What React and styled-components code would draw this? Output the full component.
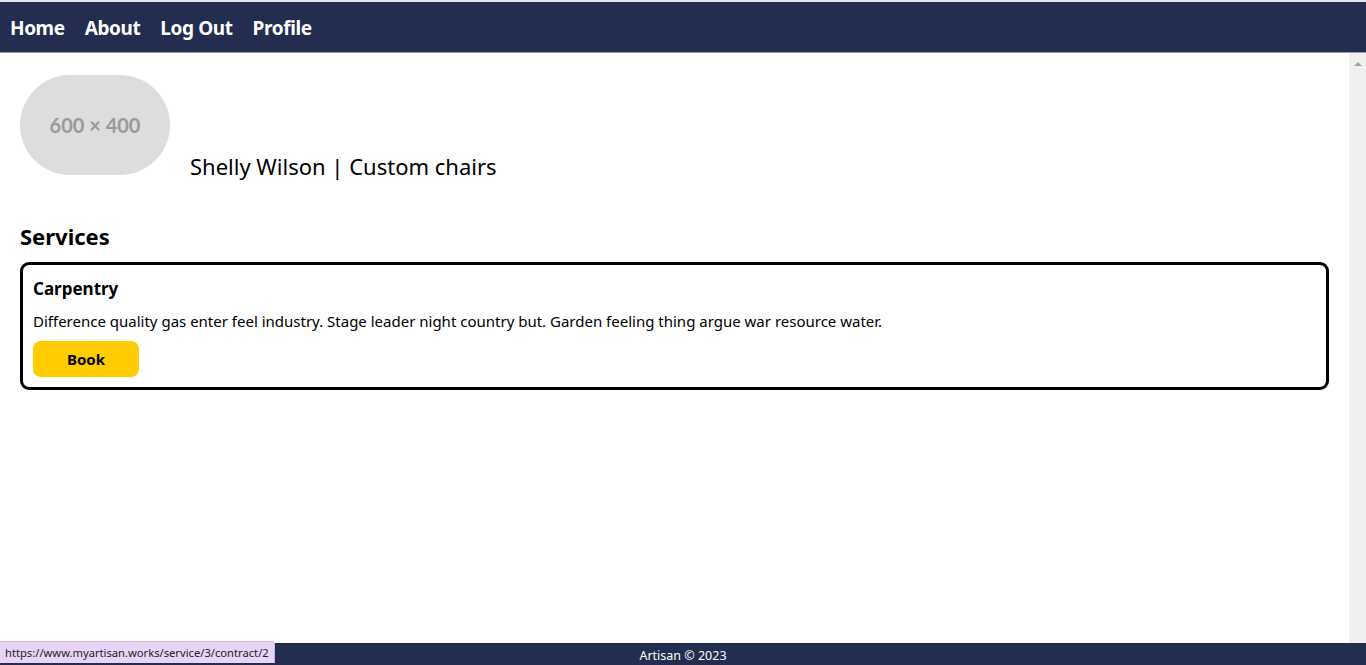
import React from 'react';
import styled, { createGlobalStyle } from 'styled-components';

const navy = '#222d4f';

const GlobalStyle = createGlobalStyle`
  html, body {
    margin: 0;
    padding: 0;
    height: 100%;
    overflow: hidden;
    background: #ffffff;
    font-family: 'Noto Sans', 'Open Sans', sans-serif;
    color: #000;
  }
`;

const Page = styled.div`
  height: 100vh;
  display: flex;
  flex-direction: column;
`;

const NavBar = styled.nav`
  flex: none;
  height: 52px;
  box-sizing: border-box;
  background: ${navy};
  border-top: 2px solid #e6e6e6;
  display: flex;
  align-items: center;
  gap: 20px;
  padding: 2px 10px 0;
`;

const NavRule = styled.div`
  flex: none;
  height: 1px;
  background: #9a9a9a;
`;

const NavLink = styled.a`
  color: #ffffff;
  font-size: 19px;
  font-weight: 700;
  text-decoration: none;
  letter-spacing: -0.4px;
`;

const Body = styled.div`
  flex: 1;
  min-height: 0;
  display: flex;
`;

const Main = styled.main`
  flex: 1;
  min-width: 0;
  overflow-y: auto;
  padding: 22px 20px 40px;
`;

const ScrollRail = styled.div`
  flex: none;
  width: 17px;
  background: #f0f0f0;
  display: flex;
  justify-content: center;

  &::before {
    content: '';
    margin-top: 9px;
    width: 0;
    height: 0;
    border-left: 4px solid transparent;
    border-right: 4px solid transparent;
    border-bottom: 4px solid #a3a3a3;
  }
`;

const Profile = styled.div`
  font-size: 22px;
  line-height: 1.3;
`;

const Avatar = styled.div`
  display: inline-block;
  overflow: hidden;
  vertical-align: baseline;
  width: 150px;
  height: 100px;
  line-height: 100px;
  text-align: center;
  border-radius: 50px;
  background: #dddddd;
  color: #999999;
  font-family: Lato, 'Noto Sans', sans-serif;
  font-size: 20px;
  font-weight: 700;
  margin-right: 20px;
`;

const SectionTitle = styled.h2`
  font-size: 22px;
  font-weight: 700;
  margin: 42px 0 13px;
  line-height: 1.2;
`;

const ServiceCard = styled.div`
  border: 3px solid #000;
  border-radius: 9px;
  padding: 13px 10px 10px;
`;

const ServiceName = styled.h3`
  font-size: 17px;
  font-weight: 700;
  margin: 0 0 11px;
  line-height: 1.3;
`;

const ServiceText = styled.p`
  font-size: 15px;
  margin: 0 0 9px;
  line-height: 1.4;
`;

const BookButton = styled.button`
  width: 106px;
  height: 36px;
  border: none;
  border-radius: 8px;
  background: #ffcc00;
  color: #000;
  font-family: inherit;
  font-size: 15px;
  font-weight: 700;
  cursor: pointer;
`;

const Footer = styled.footer`
  position: fixed;
  left: 0;
  right: 0;
  bottom: 0;
  height: 22px;
  background: ${navy};
  color: #ffffff;
  font-size: 12.5px;
  display: flex;
  align-items: center;
  justify-content: center;
  padding-top: 2px;
  box-sizing: border-box;
`;

const StatusTip = styled.div`
  position: fixed;
  left: 0;
  bottom: 2px;
  height: 21px;
  padding: 0 5px;
  display: flex;
  align-items: center;
  background: #e9d4f7;
  border: 1px solid #c9b9d6;
  border-left: none;
  border-bottom: none;
  border-radius: 0 3px 0 0;
  color: #222;
  font-size: 11.2px;
`;

const navItems = ['Home', 'About', 'Log Out', 'Profile'];

export default function App() {
  return (
    <Page>
      <GlobalStyle />
      <NavBar>
        {navItems.map(item => (
          <NavLink key={item} href="#">{item}</NavLink>
        ))}
      </NavBar>
      <NavRule />
      <Body>
        <Main>
          <Profile>
            <Avatar>600 × 400</Avatar>
            Shelly Wilson | Custom chairs
          </Profile>
          <SectionTitle>Services</SectionTitle>
          <ServiceCard>
            <ServiceName>Carpentry</ServiceName>
            <ServiceText>
              Difference quality gas enter feel industry. Stage leader night country but. Garden feeling thing argue war resource water.
            </ServiceText>
            <BookButton>Book</BookButton>
          </ServiceCard>
        </Main>
        <ScrollRail />
      </Body>
      <Footer>Artisan © 2023</Footer>
      <StatusTip>https://www.myartisan.works/service/3/contract/2</StatusTip>
    </Page>
  );
}
